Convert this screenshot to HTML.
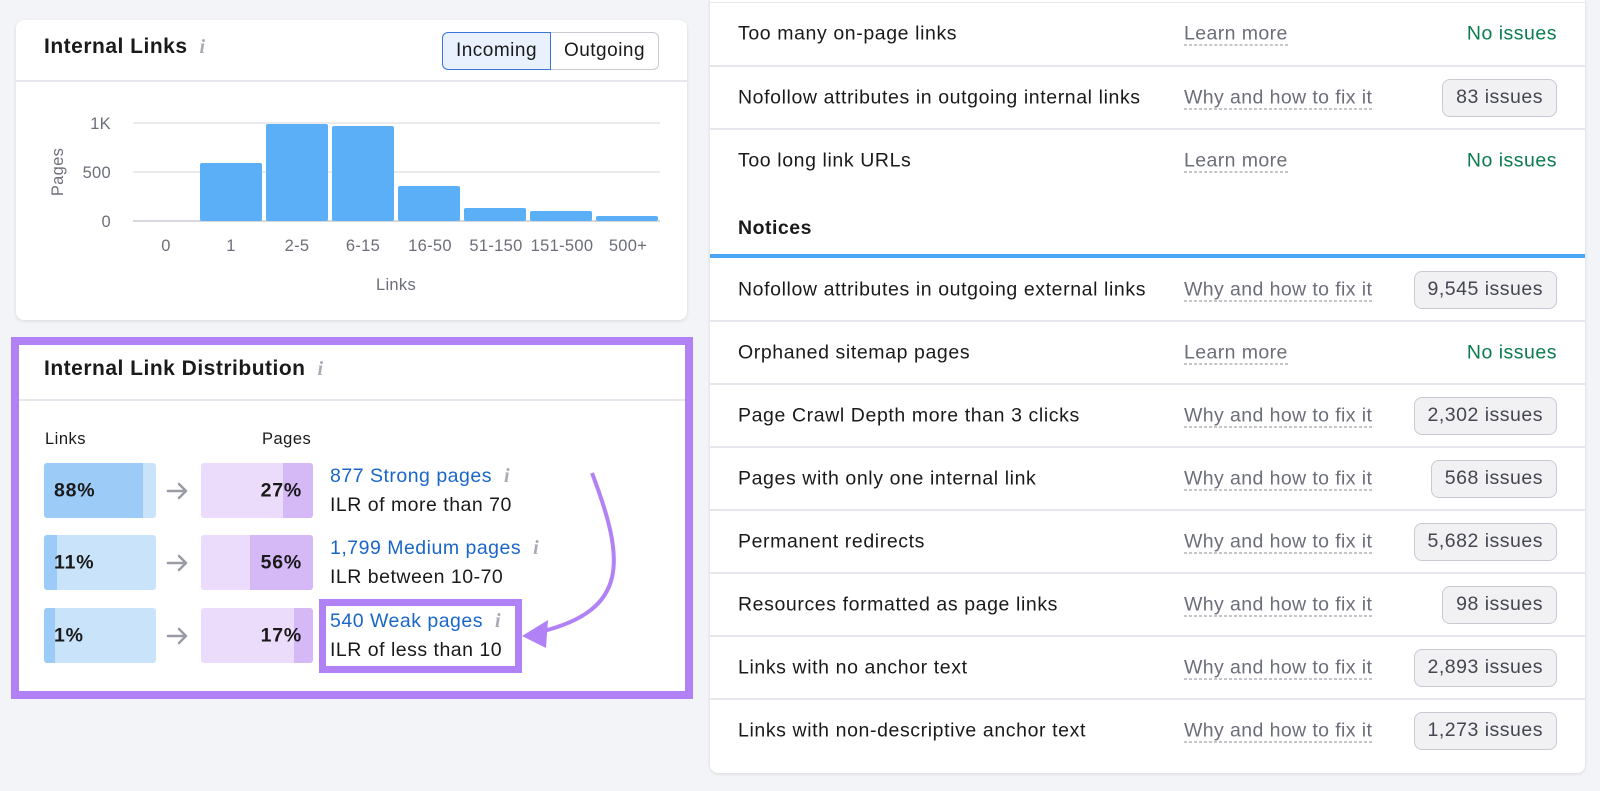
<!DOCTYPE html>
<html><head><meta charset="utf-8"><style>
*{box-sizing:border-box;margin:0;padding:0}
body{width:1600px;height:791px;background:#f3f4f8;font-family:"Liberation Sans",Arial,sans-serif;position:relative;overflow:hidden;color:#1a1a1a;letter-spacing:.5px}
.abs{position:absolute}
.card{position:absolute;background:#fff;border-radius:8px;box-shadow:0 1px 3px rgba(0,0,0,.12)}
.t{position:absolute;white-space:nowrap}
.info{font-family:"Liberation Serif",serif;font-style:italic;color:#a8abb5;font-size:20px;font-weight:bold;margin-left:12px}
.row{position:absolute;left:0;right:0;border-top:2px solid #e6e7ec;height:63px}
.name{position:absolute;left:28px;font-size:19.5px;top:50%;transform:translateY(-50%);letter-spacing:.6px}
.lnk{position:absolute;left:474px;font-size:19.5px;color:#6c6e79;top:50%;transform:translateY(-50%);border-bottom:1.5px dashed #8a8c96;line-height:22px;letter-spacing:.4px}
.ok{position:absolute;right:28px;font-size:19.5px;color:#0b7a4e;top:50%;transform:translateY(-50%)}
.badge{position:absolute;right:28px;top:50%;transform:translateY(-50%);height:38px;padding:0 13px;border:1.5px solid #c8cad2;background:#f1f1f4;border-radius:8px;font-size:19.5px;color:#454750;line-height:35px}
.bx{position:absolute;width:112px;height:55px;border-radius:3px;overflow:hidden;font-weight:bold;font-size:19.5px;letter-spacing:.8px}
.lb{background:#c9e3fb}.lb i{position:absolute;left:0;top:0;bottom:0;background:#9dcbf8}
.pb{background:#ebdcfb}.pb i{position:absolute;right:0;top:0;bottom:0;background:#d5b9f7}
.bx span{position:absolute;top:50%;transform:translateY(-50%)}
.blue{color:#1a66c9}
.d{font-size:19.5px}
</style></head><body>

<!-- Card 1 -->
<div class="card" style="left:16px;top:20px;width:671px;height:300px">
 <div class="t" style="left:28px;top:15px;font-size:21px;font-weight:bold">Internal Links<span class="info">i</span></div>
 <div class="abs" style="left:426px;top:12px;width:109px;height:38px;border:1.5px solid #3a77d6;background:#e8f1fd;border-radius:6px 0 0 6px;font-size:19px;text-align:center;line-height:35px">Incoming</div>
 <div class="abs" style="left:535px;top:12px;width:108px;height:38px;border:1.5px solid #c8cad2;border-left:none;border-radius:0 6px 6px 0;font-size:19px;text-align:center;line-height:35px">Outgoing</div>
 <div class="abs" style="left:0;right:0;top:60px;border-top:2px solid #e6e7ec"></div>
</div>
<svg class="abs" style="left:0;top:0" width="690" height="320">
 <g stroke="#e3e4ea" stroke-width="1.5"><line x1="133" y1="123" x2="660" y2="123"/><line x1="133" y1="172" x2="660" y2="172"/></g>
 <line x1="133" y1="221" x2="660" y2="221" stroke="#c8cad2" stroke-width="1.5"/>
 <g fill="#5aaff6">
  <rect x="200" y="163" width="62" height="58" rx="2"/>
  <rect x="266" y="124" width="62" height="97" rx="2"/>
  <rect x="332" y="126" width="62" height="95" rx="2"/>
  <rect x="398" y="186" width="62" height="35" rx="2"/>
  <rect x="464" y="208" width="62" height="13" rx="2"/>
  <rect x="530" y="211" width="62" height="10" rx="2"/>
  <rect x="596" y="216" width="62" height="5" rx="2"/>
 </g>
 <g font-family="Liberation Sans" font-size="16.5" fill="#6c6e79" text-anchor="end" letter-spacing=".3">
  <text x="111" y="129">1K</text><text x="111" y="178">500</text><text x="111" y="227">0</text>
 </g>
 <g font-family="Liberation Sans" font-size="16.5" fill="#6c6e79" text-anchor="middle" letter-spacing=".3">
  <text x="166" y="251">0</text><text x="231" y="251">1</text><text x="297" y="251">2-5</text><text x="363" y="251">6-15</text><text x="430" y="251">16-50</text><text x="496" y="251">51-150</text><text x="562" y="251">151-500</text><text x="628" y="251">500+</text>
  <text x="396" y="290">Links</text>
  <text transform="translate(63,172) rotate(-90)">Pages</text>
 </g>
</svg>

<!-- Card 2 -->
<div class="abs" style="left:11px;top:337px;width:682px;height:362px;background:#b182f5;padding:8px">
 <div style="position:relative;background:#fff;width:100%;height:100%">
  <div class="t" style="left:25px;top:12px;font-size:21px;font-weight:bold">Internal Link Distribution<span class="info">i</span></div>
  <div class="abs" style="left:0;right:0;top:54px;border-top:2px solid #e6e7ec"></div>
 </div>
</div>
<div class="t" style="left:45px;top:430px;font-size:16.5px">Links</div>
<div class="t" style="left:262px;top:430px;font-size:16.5px">Pages</div>

<div class="bx lb" style="left:44px;top:463px"><i style="width:99px"></i><span style="left:10px">88%</span></div>
<div class="bx lb" style="left:44px;top:535px"><i style="width:13px"></i><span style="left:10px">11%</span></div>
<div class="bx lb" style="left:44px;top:608px"><i style="width:11px"></i><span style="left:10px">1%</span></div>
<svg class="abs" style="left:165px;top:480px" width="28" height="170" fill="none" stroke="#9a9ca5" stroke-width="2.5" stroke-linecap="round" stroke-linejoin="round">
 <path d="M3 11h18M14 4l7 7-7 7"/>
 <path d="M3 83h18M14 76l7 7-7 7"/>
 <path d="M3 156h18M14 149l7 7-7 7"/>
</svg>
<div class="bx pb" style="left:201px;top:463px"><i style="width:30px"></i><span style="right:11px">27%</span></div>
<div class="bx pb" style="left:201px;top:535px"><i style="width:63px"></i><span style="right:11px">56%</span></div>
<div class="bx pb" style="left:201px;top:608px"><i style="width:19px"></i><span style="right:11px">17%</span></div>

<div class="t blue d" style="left:330px;top:465px">877 Strong pages<span class="info">i</span></div>
<div class="t d" style="left:330px;top:494px">ILR of more than 70</div>
<div class="t blue d" style="left:330px;top:537px">1,799 Medium pages<span class="info">i</span></div>
<div class="t d" style="left:330px;top:566px">ILR between 10-70</div>
<div class="abs" style="left:319px;top:599px;width:203px;height:74px;border:7px solid #b182f5"></div>
<div class="t blue d" style="left:330px;top:610px">540 Weak pages<span class="info">i</span></div>
<div class="t d" style="left:330px;top:639px">ILR of less than 10</div>
<svg class="abs" style="left:0;top:0" width="690" height="700">
 <path d="M592 473 C 625 560, 630 610, 540 632" fill="none" stroke="#b182f5" stroke-width="4"/>
 <path d="M522 636 L548 620 L546 648 Z" fill="#b182f5"/>
</svg>

<!-- Right panel -->
<div class="card" style="left:710px;top:-6px;width:875px;height:779px;overflow:hidden">
 <div class="row" style="top:8px;height:63px;border-top:1px solid #e6e7ec"><div class="name">Too many on-page links</div><div class="lnk">Learn more</div><div class="ok">No issues</div></div>
 <div class="row" style="top:71px"><div class="name">Nofollow attributes in outgoing internal links</div><div class="lnk">Why and how to fix it</div><div class="badge">83 issues</div></div>
 <div class="row" style="top:134px"><div class="name">Too long link URLs</div><div class="lnk">Learn more</div><div class="ok">No issues</div></div>
 <div class="t" style="left:28px;top:223px;font-size:19.5px;font-weight:bold">Notices</div>
 <div class="abs" style="left:0;right:0;top:260px;height:4px;background:#4ba7f5"></div>
 <div class="row" style="top:264px;border-top:none"><div class="name">Nofollow attributes in outgoing external links</div><div class="lnk">Why and how to fix it</div><div class="badge">9,545 issues</div></div>
 <div class="row" style="top:326px"><div class="name">Orphaned sitemap pages</div><div class="lnk">Learn more</div><div class="ok">No issues</div></div>
 <div class="row" style="top:389px"><div class="name">Page Crawl Depth more than 3 clicks</div><div class="lnk">Why and how to fix it</div><div class="badge">2,302 issues</div></div>
 <div class="row" style="top:452px"><div class="name">Pages with only one internal link</div><div class="lnk">Why and how to fix it</div><div class="badge">568 issues</div></div>
 <div class="row" style="top:515px"><div class="name">Permanent redirects</div><div class="lnk">Why and how to fix it</div><div class="badge">5,682 issues</div></div>
 <div class="row" style="top:578px"><div class="name">Resources formatted as page links</div><div class="lnk">Why and how to fix it</div><div class="badge">98 issues</div></div>
 <div class="row" style="top:641px"><div class="name">Links with no anchor text</div><div class="lnk">Why and how to fix it</div><div class="badge">2,893 issues</div></div>
 <div class="row" style="top:704px"><div class="name">Links with non-descriptive anchor text</div><div class="lnk">Why and how to fix it</div><div class="badge">1,273 issues</div></div>
</div>
</body></html>
